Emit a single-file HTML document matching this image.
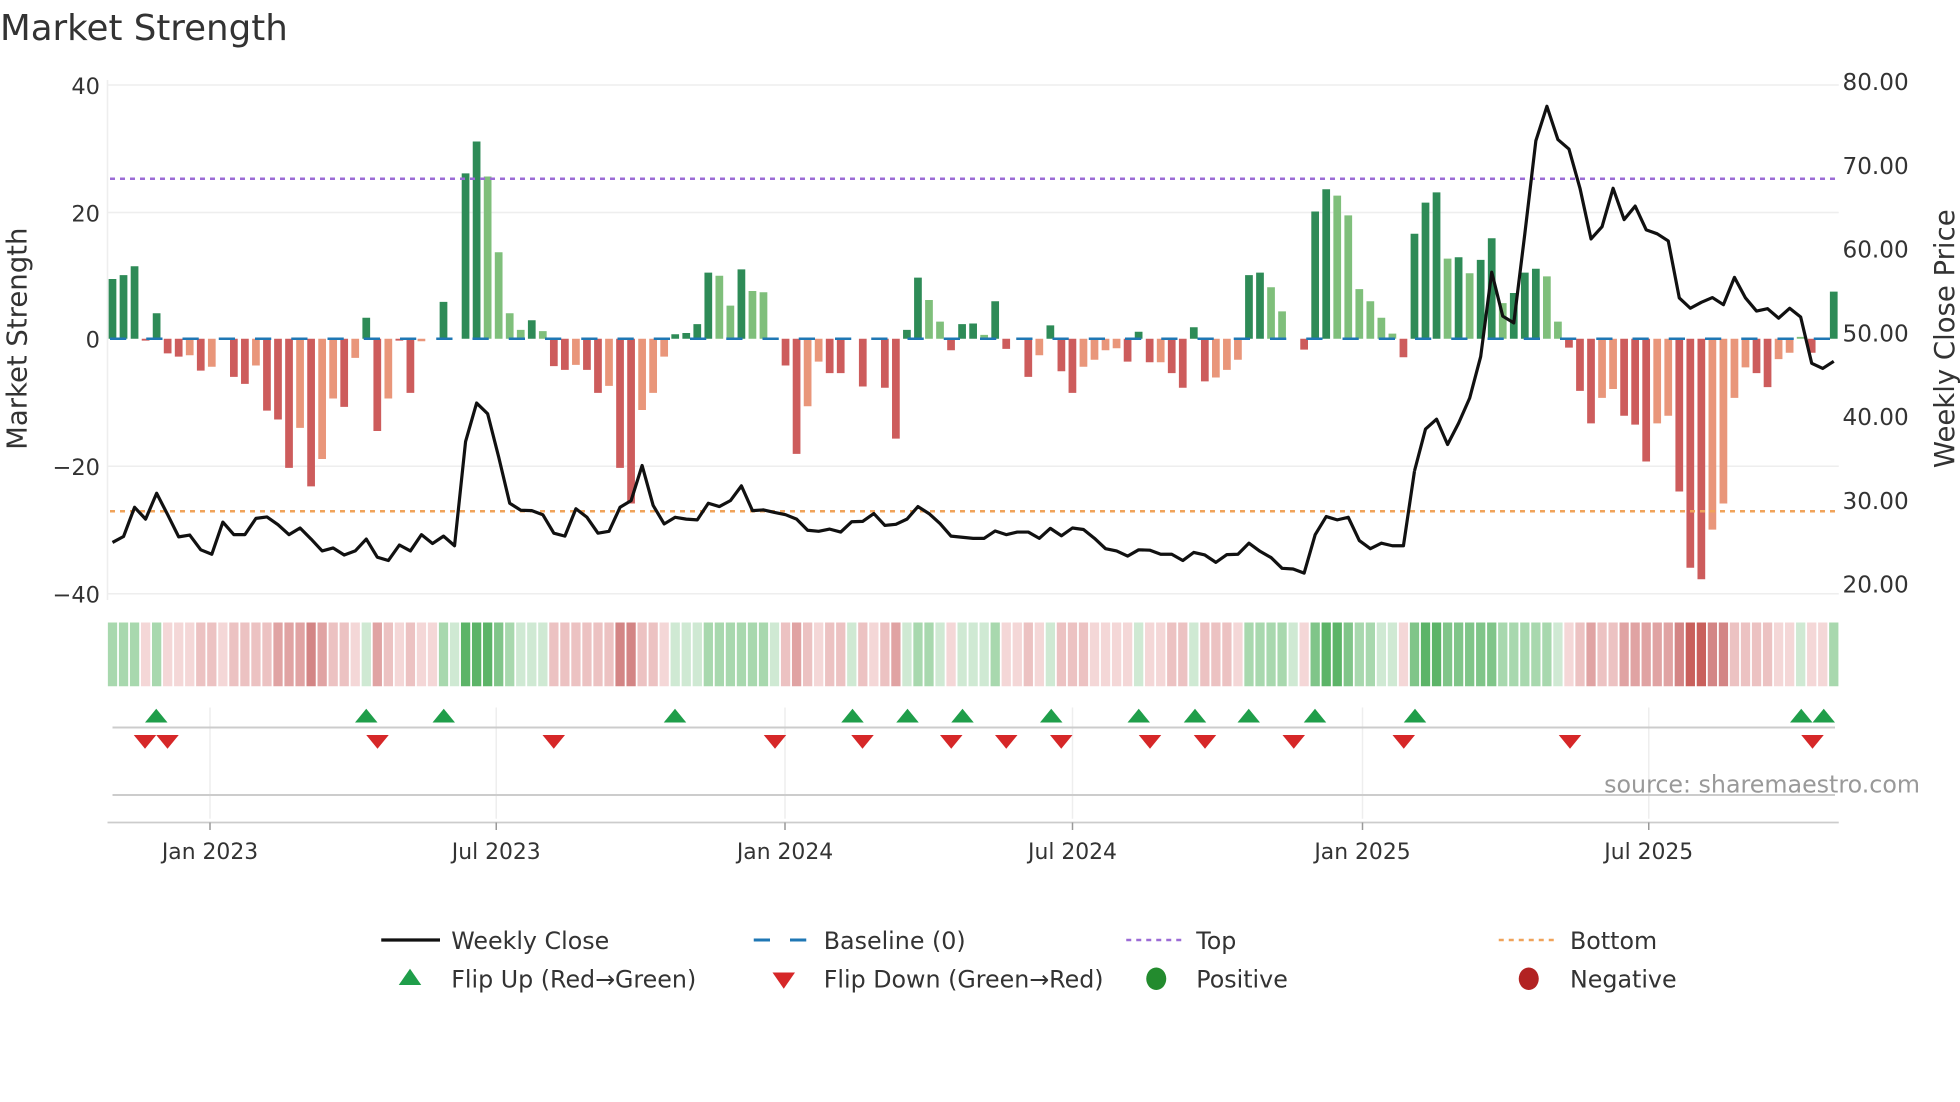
<!DOCTYPE html>
<html><head><meta charset="utf-8">
<style>html,body{margin:0;padding:0;background:#fff;}svg{display:block;}
text{font-family:"DejaVu Sans","Liberation Sans",sans-serif;fill:#333;}</style></head>
<body>
<svg width="1960" height="1102" viewBox="0 0 1568 881.6" xmlns="http://www.w3.org/2000/svg">
<rect width="1568" height="882" fill="#fff"/>
<text x="0" y="32" font-size="28.5">Market Strength</text>
<g stroke="#eeeeee" stroke-width="1.2">
<line x1="86" y1="68" x2="1471" y2="68"/><line x1="86" y1="170" x2="1471" y2="170"/>
<line x1="86" y1="373" x2="1471" y2="373"/><line x1="86" y1="475" x2="1471" y2="475"/>
<line x1="86" y1="64" x2="86" y2="480"/>
<line x1="168" y1="566" x2="168" y2="655"/><line x1="397" y1="566" x2="397" y2="655"/>
<line x1="628" y1="566" x2="628" y2="655"/><line x1="858" y1="566" x2="858" y2="655"/>
<line x1="1090" y1="566" x2="1090" y2="655"/><line x1="1319" y1="566" x2="1319" y2="655"/>
</g>
<g font-size="18" text-anchor="end">
<text x="80" y="75">40</text><text x="80" y="177">20</text><text x="80" y="278">0</text>
<text x="80" y="380">−20</text><text x="80" y="482">−40</text></g>
<g font-size="18.5">
<text x="1474" y="72">80.00</text><text x="1474" y="139">70.00</text><text x="1474" y="206">60.00</text>
<text x="1474" y="273">50.00</text><text x="1474" y="340">40.00</text><text x="1474" y="407">30.00</text>
<text x="1474" y="474">20.00</text></g>
<text transform="translate(21,271) rotate(-90)" font-size="22" text-anchor="middle">Market Strength</text>
<text transform="translate(1563,271) rotate(-90)" font-size="22" text-anchor="middle">Weekly Close Price</text>

<g transform="translate(86.9,271) scale(8.827,-5.09)">
<path fill="#2e8b57" d="M0 0h.7v9.4h-.7zM1 0h.7v10h-.7zM2 0h.7v11.4h-.7zM4 0h.7v4h-.7zM23 0h.7v3.3h-.7zM30 0h.7v5.8h-.7zM32 0h.7v26h-.7zM33 0h.7v31h-.7zM38 0h.7v2.9h-.7zM51 0h.7v.7h-.7zM52 0h.7v.9h-.7zM53 0h.7v2.3h-.7zM54 0h.7v10.4h-.7zM57 0h.7v10.9h-.7zM72 0h.7v1.4h-.7zM73 0h.7v9.6h-.7zM77 0h.7v2.3h-.7zM78 0h.7v2.4h-.7zM80 0h.7v5.9h-.7zM85 0h.7v2.1h-.7zM93 0h.7v1.1h-.7zM98 0h.7v1.8h-.7zM103 0h.7v10h-.7zM104 0h.7v10.4h-.7zM109 0h.7v20h-.7zM110 0h.7v23.5h-.7zM118 0h.7v16.5h-.7zM119 0h.7v21.4h-.7zM120 0h.7v23h-.7zM122 0h.7v12.8h-.7zM124 0h.7v12.4h-.7zM125 0h.7v15.8h-.7zM127 0h.7v7.2h-.7zM128 0h.7v10.4h-.7zM129 0h.7v11h-.7zM156 0h.7v7.4h-.7z"/>
<path fill="#7fbf7b" d="M34 0h.7v25.5h-.7zM35 0h.7v13.6h-.7zM36 0h.7v4h-.7zM37 0h.7v1.4h-.7zM39 0h.7v1.2h-.7zM55 0h.7v9.9h-.7zM56 0h.7v5.2h-.7zM58 0h.7v7.5h-.7zM59 0h.7v7.3h-.7zM74 0h.7v6.1h-.7zM75 0h.7v2.7h-.7zM79 0h.7v.6h-.7zM105 0h.7v8.1h-.7zM106 0h.7v4.3h-.7zM111 0h.7v22.5h-.7zM112 0h.7v19.4h-.7zM113 0h.7v7.8h-.7zM114 0h.7v5.9h-.7zM115 0h.7v3.3h-.7zM116 0h.7v.8h-.7zM121 0h.7v12.6h-.7zM123 0h.7v10.3h-.7zM126 0h.7v5.6h-.7zM130 0h.7v9.8h-.7zM131 0h.7v2.7h-.7zM153 0h.7v.3h-.7z"/>
<path fill="#cd5c5c" d="M3 0h.7v-.3h-.7zM5 0h.7v-2.3h-.7zM6 0h.7v-2.8h-.7zM8 0h.7v-5h-.7zM11 0h.7v-6h-.7zM12 0h.7v-7.1h-.7zM14 0h.7v-11.3h-.7zM15 0h.7v-12.7h-.7zM16 0h.7v-20.3h-.7zM18 0h.7v-23.2h-.7zM21 0h.7v-10.7h-.7zM24 0h.7v-14.5h-.7zM26 0h.7v-.3h-.7zM27 0h.7v-8.5h-.7zM40 0h.7v-4.3h-.7zM41 0h.7v-4.9h-.7zM43 0h.7v-4.9h-.7zM44 0h.7v-8.5h-.7zM46 0h.7v-20.3h-.7zM47 0h.7v-25.9h-.7zM61 0h.7v-4.2h-.7zM62 0h.7v-18.1h-.7zM65 0h.7v-5.4h-.7zM66 0h.7v-5.4h-.7zM68 0h.7v-7.5h-.7zM70 0h.7v-7.7h-.7zM71 0h.7v-15.7h-.7zM76 0h.7v-1.8h-.7zM81 0h.7v-1.6h-.7zM83 0h.7v-6h-.7zM86 0h.7v-5.1h-.7zM87 0h.7v-8.5h-.7zM92 0h.7v-3.6h-.7zM94 0h.7v-3.7h-.7zM96 0h.7v-5.4h-.7zM97 0h.7v-7.7h-.7zM99 0h.7v-6.7h-.7zM108 0h.7v-1.7h-.7zM117 0h.7v-2.9h-.7zM132 0h.7v-1.4h-.7zM133 0h.7v-8.2h-.7zM134 0h.7v-13.3h-.7zM137 0h.7v-12.1h-.7zM138 0h.7v-13.5h-.7zM139 0h.7v-19.3h-.7zM142 0h.7v-24h-.7zM143 0h.7v-36h-.7zM144 0h.7v-37.8h-.7zM149 0h.7v-5.4h-.7zM150 0h.7v-7.6h-.7zM154 0h.7v-2.2h-.7z"/>
<path fill="#e9967a" d="M7 0h.7v-2.6h-.7zM9 0h.7v-4.4h-.7zM13 0h.7v-4.2h-.7zM17 0h.7v-14h-.7zM19 0h.7v-18.9h-.7zM20 0h.7v-9.4h-.7zM22 0h.7v-3h-.7zM25 0h.7v-9.4h-.7zM28 0h.7v-.4h-.7zM42 0h.7v-4.1h-.7zM45 0h.7v-7.4h-.7zM48 0h.7v-11.2h-.7zM49 0h.7v-8.5h-.7zM50 0h.7v-2.8h-.7zM63 0h.7v-10.6h-.7zM64 0h.7v-3.6h-.7zM84 0h.7v-2.6h-.7zM88 0h.7v-4.4h-.7zM89 0h.7v-3.3h-.7zM90 0h.7v-1.8h-.7zM91 0h.7v-1.5h-.7zM95 0h.7v-3.7h-.7zM100 0h.7v-6.1h-.7zM101 0h.7v-4.9h-.7zM102 0h.7v-3.3h-.7zM135 0h.7v-9.3h-.7zM136 0h.7v-7.9h-.7zM140 0h.7v-13.3h-.7zM141 0h.7v-12.1h-.7zM145 0h.7v-30h-.7zM146 0h.7v-25.9h-.7zM147 0h.7v-9.3h-.7zM148 0h.7v-4.5h-.7zM151 0h.7v-3.2h-.7zM152 0h.7v-2.2h-.7z"/>
</g>
<line x1="88" y1="271" x2="1470" y2="271" stroke="#1f77b4" stroke-width="2" stroke-dasharray="13 16"/>
<line x1="88" y1="143" x2="1470" y2="143" stroke="#9b6bd6" stroke-width="2" stroke-dasharray="4 4"/>
<line x1="88" y1="409" x2="1470" y2="409" stroke="#f0a35a" stroke-width="2" stroke-dasharray="4 4"/>

<g transform="translate(90,95.95) scale(8.827,0.2957)">
<polyline fill="none" stroke="#111" stroke-width="3.2" vector-effect="non-scaling-stroke" stroke-linejoin="round" points="0,1143 1,1127 2,1048 3,1080 4,1010 5,1068 6,1128 7,1123 8,1163 9,1175 10,1088 11,1122 12,1122 13,1078 14,1074 15,1095 16,1122 17,1104 18,1134 19,1166 20,1158 21,1177 22,1166 23,1134 24,1183 25,1192 26,1150 27,1166 28,1122 29,1146 30,1126 31,1152 32,870 33,766 34,795 35,912 36,1037 37,1056 38,1057 39,1068 40,1118 41,1126 42,1052 43,1075 44,1118 45,1113 46,1048 47,1030 48,935 49,1043 50,1093 51,1075 52,1080 53,1082 54,1037 55,1046 56,1030 57,990 58,1057 59,1055 60,1062 61,1068 62,1080 63,1110 64,1113 65,1107 66,1115 67,1087 68,1086 69,1065 70,1097 71,1094 72,1080 73,1046 74,1065 75,1092 76,1126 77,1129 78,1132 79,1132 80,1112 81,1122 82,1115 83,1115 84,1132 85,1105 86,1125 87,1104 88,1108 89,1132 90,1160 91,1166 92,1180 93,1163 94,1164 95,1175 96,1175 97,1192 98,1170 99,1177 100,1197 101,1176 102,1175 103,1145 104,1167 105,1184 106,1213 107,1215 108,1226 109,1122 110,1073 111,1082 112,1075 113,1138 114,1160 115,1145 116,1152 117,1152 118,950"/>
</g>
<g transform="translate(90,63.5) scale(8.827,0.3168)">
<polyline fill="none" stroke="#111" stroke-width="3.2" vector-effect="non-scaling-stroke" stroke-linejoin="round" points="118,989 119,883 120,858 121,922 122,868 123,805 124,700 125,487 126,598 127,615 128,390 129,155 130,68 131,152 132,176 133,275 134,403 135,372 136,275 137,354 138,320 139,380 140,390 141,408 142,552 143,578 144,563 145,551 146,569 147,500 148,552 149,585 150,579 151,603 152,578 153,600 154,717 155,730 156,712"/>
</g>

<g transform="translate(86.3,498) scale(8.827,1)">
<path fill="#cfe9d3" d="M23 0h.84v51h-.84zM31 0h.84v51h-.84zM37 0h.84v51h-.84zM38 0h.84v51h-.84zM39 0h.84v51h-.84zM51 0h.84v51h-.84zM52 0h.84v51h-.84zM53 0h.84v51h-.84zM60 0h.84v51h-.84zM67 0h.84v51h-.84zM72 0h.84v51h-.84zM75 0h.84v51h-.84zM77 0h.84v51h-.84zM78 0h.84v51h-.84zM79 0h.84v51h-.84zM85 0h.84v51h-.84zM93 0h.84v51h-.84zM98 0h.84v51h-.84zM107 0h.84v51h-.84zM115 0h.84v51h-.84zM116 0h.84v51h-.84zM131 0h.84v51h-.84zM153 0h.84v51h-.84z"/>
<path fill="#a8d8ae" d="M0 0h.84v51h-.84zM1 0h.84v51h-.84zM2 0h.84v51h-.84zM4 0h.84v51h-.84zM30 0h.84v51h-.84zM36 0h.84v51h-.84zM54 0h.84v51h-.84zM55 0h.84v51h-.84zM56 0h.84v51h-.84zM57 0h.84v51h-.84zM58 0h.84v51h-.84zM59 0h.84v51h-.84zM73 0h.84v51h-.84zM74 0h.84v51h-.84zM80 0h.84v51h-.84zM103 0h.84v51h-.84zM104 0h.84v51h-.84zM105 0h.84v51h-.84zM106 0h.84v51h-.84zM113 0h.84v51h-.84zM114 0h.84v51h-.84zM126 0h.84v51h-.84zM127 0h.84v51h-.84zM128 0h.84v51h-.84zM129 0h.84v51h-.84zM130 0h.84v51h-.84zM156 0h.84v51h-.84z"/>
<path fill="#80c589" d="M35 0h.84v51h-.84zM109 0h.84v51h-.84zM112 0h.84v51h-.84zM118 0h.84v51h-.84zM121 0h.84v51h-.84zM122 0h.84v51h-.84zM123 0h.84v51h-.84zM124 0h.84v51h-.84zM125 0h.84v51h-.84z"/>
<path fill="#5cb468" d="M32 0h.84v51h-.84zM33 0h.84v51h-.84zM34 0h.84v51h-.84zM110 0h.84v51h-.84zM111 0h.84v51h-.84zM119 0h.84v51h-.84zM120 0h.84v51h-.84z"/>
<path fill="#f4d7d7" d="M3 0h.84v51h-.84zM5 0h.84v51h-.84zM6 0h.84v51h-.84zM7 0h.84v51h-.84zM10 0h.84v51h-.84zM22 0h.84v51h-.84zM26 0h.84v51h-.84zM28 0h.84v51h-.84zM29 0h.84v51h-.84zM50 0h.84v51h-.84zM64 0h.84v51h-.84zM69 0h.84v51h-.84zM76 0h.84v51h-.84zM81 0h.84v51h-.84zM82 0h.84v51h-.84zM84 0h.84v51h-.84zM89 0h.84v51h-.84zM90 0h.84v51h-.84zM91 0h.84v51h-.84zM92 0h.84v51h-.84zM94 0h.84v51h-.84zM95 0h.84v51h-.84zM102 0h.84v51h-.84zM108 0h.84v51h-.84zM117 0h.84v51h-.84zM132 0h.84v51h-.84zM151 0h.84v51h-.84zM152 0h.84v51h-.84zM154 0h.84v51h-.84zM155 0h.84v51h-.84z"/>
<path fill="#ecc2c2" d="M8 0h.84v51h-.84zM9 0h.84v51h-.84zM11 0h.84v51h-.84zM12 0h.84v51h-.84zM13 0h.84v51h-.84zM14 0h.84v51h-.84zM20 0h.84v51h-.84zM21 0h.84v51h-.84zM25 0h.84v51h-.84zM27 0h.84v51h-.84zM40 0h.84v51h-.84zM41 0h.84v51h-.84zM42 0h.84v51h-.84zM43 0h.84v51h-.84zM44 0h.84v51h-.84zM45 0h.84v51h-.84zM48 0h.84v51h-.84zM49 0h.84v51h-.84zM61 0h.84v51h-.84zM63 0h.84v51h-.84zM65 0h.84v51h-.84zM66 0h.84v51h-.84zM68 0h.84v51h-.84zM70 0h.84v51h-.84zM83 0h.84v51h-.84zM86 0h.84v51h-.84zM87 0h.84v51h-.84zM88 0h.84v51h-.84zM96 0h.84v51h-.84zM97 0h.84v51h-.84zM99 0h.84v51h-.84zM100 0h.84v51h-.84zM101 0h.84v51h-.84zM133 0h.84v51h-.84zM135 0h.84v51h-.84zM136 0h.84v51h-.84zM147 0h.84v51h-.84zM148 0h.84v51h-.84zM149 0h.84v51h-.84zM150 0h.84v51h-.84z"/>
<path fill="#e0a3a3" d="M15 0h.84v51h-.84zM16 0h.84v51h-.84zM17 0h.84v51h-.84zM19 0h.84v51h-.84zM24 0h.84v51h-.84zM62 0h.84v51h-.84zM71 0h.84v51h-.84zM134 0h.84v51h-.84zM137 0h.84v51h-.84zM138 0h.84v51h-.84zM139 0h.84v51h-.84zM140 0h.84v51h-.84zM141 0h.84v51h-.84z"/>
<path fill="#d38585" d="M18 0h.84v51h-.84zM46 0h.84v51h-.84zM47 0h.84v51h-.84zM142 0h.84v51h-.84zM145 0h.84v51h-.84zM146 0h.84v51h-.84z"/>
<path fill="#c9605c" d="M143 0h.84v51h-.84zM144 0h.84v51h-.84z"/>
</g>

<line x1="90" y1="582" x2="1468" y2="582" stroke="#cccccc" stroke-width="1.6"/>
<line x1="90" y1="636" x2="1468" y2="636" stroke="#cccccc" stroke-width="1.6"/>
<line x1="86" y1="658" x2="1471" y2="658" stroke="#cccccc" stroke-width="1.4"/>
<g fill="#1f9e4a">
<polygon points="116,578 134,578 125,567"/><polygon points="284,578 302,578 293,567"/><polygon points="346,578 364,578 355,567"/>
<polygon points="531,578 549,578 540,567"/><polygon points="673,578 691,578 682,567"/><polygon points="717,578 735,578 726,567"/>
<polygon points="761,578 779,578 770,567"/><polygon points="832,578 850,578 841,567"/><polygon points="902,578 920,578 911,567"/>
<polygon points="947,578 965,578 956,567"/><polygon points="990,578 1008,578 999,567"/><polygon points="1043,578 1061,578 1052,567"/>
<polygon points="1123,578 1141,578 1132,567"/><polygon points="1432,578 1450,578 1441,567"/><polygon points="1450,578 1468,578 1459,567"/>
</g>
<g fill="#d62728">
<polygon points="107,588 125,588 116,599"/><polygon points="125,588 143,588 134,599"/><polygon points="293,588 311,588 302,599"/>
<polygon points="434,588 452,588 443,599"/><polygon points="611,588 629,588 620,599"/><polygon points="681,588 699,588 690,599"/>
<polygon points="752,588 770,588 761,599"/><polygon points="796,588 814,588 805,599"/><polygon points="840,588 858,588 849,599"/>
<polygon points="911,588 929,588 920,599"/><polygon points="955,588 973,588 964,599"/><polygon points="1026,588 1044,588 1035,599"/>
<polygon points="1114,588 1132,588 1123,599"/><polygon points="1247,588 1265,588 1256,599"/><polygon points="1441,588 1459,588 1450,599"/>
</g>
<g stroke="#999" stroke-width="1.2">
<line x1="168" y1="658" x2="168" y2="664"/><line x1="397" y1="658" x2="397" y2="664"/>
<line x1="628" y1="658" x2="628" y2="664"/><line x1="858" y1="658" x2="858" y2="664"/>
<line x1="1090" y1="658" x2="1090" y2="664"/><line x1="1319" y1="658" x2="1319" y2="664"/></g>
<g font-size="17.5" text-anchor="middle">
<text x="168" y="687">Jan 2023</text><text x="397" y="687">Jul 2023</text><text x="628" y="687">Jan 2024</text>
<text x="858" y="687">Jul 2024</text><text x="1090" y="687">Jan 2025</text><text x="1319" y="687">Jul 2025</text></g>
<text x="1536" y="634" font-size="19" text-anchor="end" style="fill:#999">source: sharemaestro.com</text>
<g font-size="19">
<line x1="305" y1="752" x2="352" y2="752" stroke="#111" stroke-width="2.6"/>
<text x="361" y="759">Weekly Close</text>
<line x1="603" y1="752" x2="645" y2="752" stroke="#1f77b4" stroke-width="2.4" stroke-dasharray="13 16"/>
<text x="659" y="759">Baseline (0)</text>
<line x1="901" y1="752" x2="945" y2="752" stroke="#9b6bd6" stroke-width="2" stroke-dasharray="4 4"/>
<text x="957" y="759">Top</text>
<line x1="1199" y1="752" x2="1243" y2="752" stroke="#f0a35a" stroke-width="2" stroke-dasharray="4 4"/>
<text x="1256" y="759">Bottom</text>
<polygon points="319,788 337,788 328,775" fill="#1f9e4a"/>
<text x="361" y="790">Flip Up (Red→Green)</text>
<polygon points="618,778 636,778 627,791" fill="#d62728"/>
<text x="659" y="790">Flip Down (Green→Red)</text>
<ellipse cx="925" cy="783" rx="8" ry="9" fill="#238b2e"/>
<text x="957" y="790">Positive</text>
<ellipse cx="1223" cy="783" rx="8" ry="9" fill="#b22222"/>
<text x="1256" y="790">Negative</text>
</g>
</svg>
</body></html>
